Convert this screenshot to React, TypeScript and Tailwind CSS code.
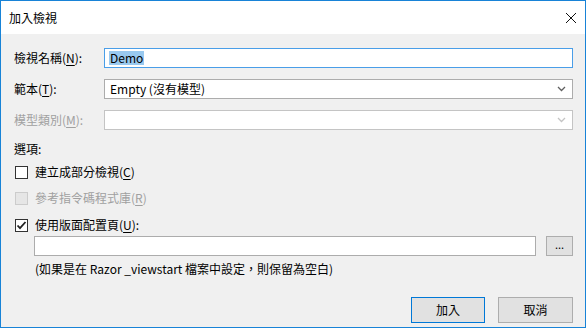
import React from 'react';

const font = { fontFamily: '"Segoe UI", "Noto Sans CJK TC", "Noto Sans", sans-serif' };

function Chevron({ disabled }: { disabled?: boolean }) {
    return (
        <svg width="9" height="6" viewBox="0 0 9 6" className="mr-[6px]">
            <path
                d="M1 1 L4.5 4.5 L8 1"
                fill="none"
                stroke={disabled ? '#c4c4c4' : '#606060'}
                strokeWidth="1.3"
            />
        </svg>
    );
}

function CheckBox({ checked, disabled }: { checked?: boolean; disabled?: boolean }) {
    return (
        <div
            className={`w-[13px] h-[13px] border flex items-center justify-center ${
                disabled ? 'border-[#cccccc] bg-[#e6e6e6]' : 'border-[#333333] bg-white'
            }`}
        >
            {checked && (
                <svg width="11" height="11" viewBox="0 0 11 11">
                    <path d="M1.5 5.5 L4 8.2 L9.5 2" fill="none" stroke="#222" strokeWidth="1.8" />
                </svg>
            )}
        </div>
    );
}

function Key({ k }: { k: string }) {
    return <span className="underline underline-offset-2">{k}</span>;
}

export default function App() {
    return (
        <div
            className="w-[586px] h-[328px] border border-[#1883d7] flex flex-col text-[12px] text-black overflow-hidden"
            style={font}
        >
            {/* Title bar */}
            <div className="h-[33px] bg-white flex items-center justify-between pl-[8px] pr-[8px]">
                <span className="text-[12px]">加入檢視</span>
                <svg width="12" height="12" viewBox="0 0 12 12">
                    <path d="M1 1 L11 11 M11 1 L1 11" stroke="#111" strokeWidth="1" />
                </svg>
            </div>

            {/* Body */}
            <div className="flex-1 bg-[#f0f0f0] pl-[13px] pr-[12px] pt-[14px] flex flex-col">
                <div className="flex items-center h-[20px]">
                    <div className="w-[90px]">
                        檢視名稱(<Key k="N" />):
                    </div>
                    <div className="flex-1 h-[20px] bg-white border border-[#4a9ee8] flex items-center pl-[4px]">
                        <span className="bg-[#99c9ef] px-[1px] leading-[14px]">Demo</span>
                    </div>
                </div>

                <div className="flex items-center h-[20px] mt-[11px]">
                    <div className="w-[90px]">
                        範本(<Key k="T" />):
                    </div>
                    <div className="flex-1 h-[20px] bg-white border border-[#acacac] flex items-center justify-between pl-[5px]">
                        <span>Empty (沒有模型)</span>
                        <Chevron />
                    </div>
                </div>

                <div className="flex items-center h-[20px] mt-[11px]">
                    <div className="w-[90px] text-[#a0a0a0]">
                        模型類別(<Key k="M" />):
                    </div>
                    <div className="flex-1 h-[20px] bg-white border border-[#c4c4c4] flex items-center justify-end">
                        <Chevron disabled />
                    </div>
                </div>

                <div className="mt-[10px] h-[18px] flex items-center">選項:</div>

                <div className="flex items-center gap-[7px] mt-[5px] h-[18px] ml-[1px]">
                    <CheckBox />
                    <span>
                        建立成部分檢視(<Key k="C" />)
                    </span>
                </div>
                <div className="flex items-center gap-[7px] mt-[8px] h-[18px] ml-[1px] text-[#a0a0a0]">
                    <CheckBox disabled />
                    <span>
                        參考指令碼程式庫(<Key k="R" />)
                    </span>
                </div>
                <div className="flex items-center gap-[7px] mt-[9px] h-[18px] ml-[1px]">
                    <CheckBox checked />
                    <span>
                        使用版面配置頁(<Key k="U" />):
                    </span>
                </div>

                <div className="flex items-center mt-[2px] ml-[20px] gap-[10px]">
                    <div className="flex-1 h-[20px] bg-white border border-[#acacac]" />
                    <div className="w-[27px] h-[20px] bg-[#e1e1e1] border border-[#adadad] flex items-center justify-center text-[11px] leading-none pb-[4px]">
                        ...
                    </div>
                </div>

                <div className="ml-[21px] mt-[4px] h-[18px] flex items-center">
                    (如果是在 Razor _viewstart 檔案中設定，則保留為空白)
                </div>

                <div className="flex justify-end gap-[13px] mt-[19px]">
                    <button className="w-[74px] h-[26px] bg-[#e1e1e1] border border-[#0078d7]">加入</button>
                    <button className="w-[75px] h-[26px] bg-[#e1e1e1] border border-[#adadad]">取消</button>
                </div>
            </div>
        </div>
    );
}
